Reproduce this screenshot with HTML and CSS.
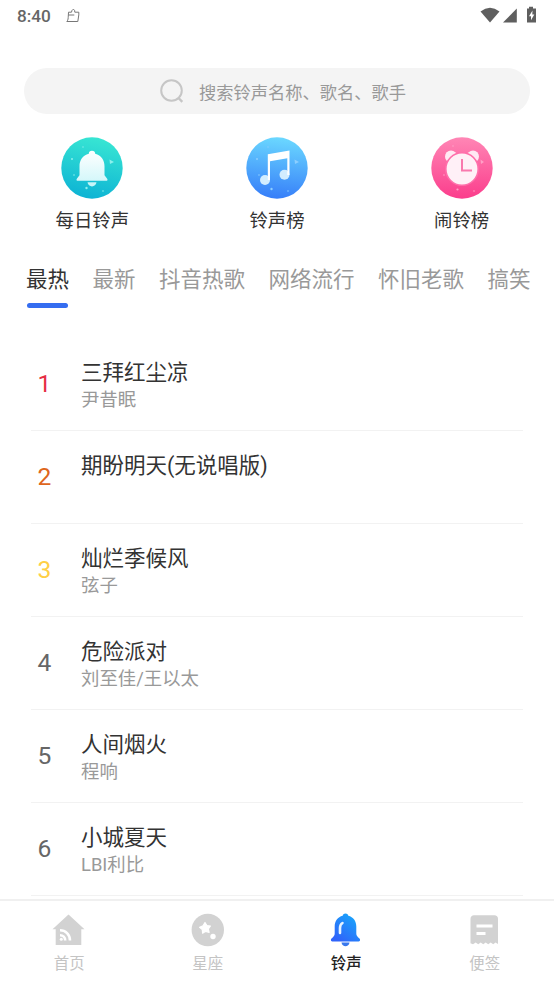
FILE: index.html
```html
<!DOCTYPE html>
<html lang="zh-CN">
<head>
<meta charset="utf-8">
<title>铃声</title>
<link rel="stylesheet" href="styles.css">
</head>
<body>
<div class="app">
  <header class="status">
    <span class="time">8:40</span>
    <svg class="status-app" width="16" height="16" viewBox="0 0 16 16" fill="none" stroke="#777" stroke-width="1" stroke-linejoin="round"><path d="M3.500 4.200h3L7 2.400c.8-1.400 2.300-1 2.600.1l.2 1.700h4v2.700l-1 6.600H1.800c1.500-1.500 1.300-3.200 1.500-5.400zM3.500 7h5.800"/></svg>
    <svg class="status-icons" width="58" height="18" viewBox="0 0 58 18" fill="#5f5f5f"><path d="M.5 5.400Q10 -1.800 19.500 5.400L10 16.500Z"/><path d="M23 16.500 36.800 2.500V16.500Z"/><path d="M49 .8h4v1.700h3v14H47v-14h2z"/><path d="M52.500 4.500 49 10.200h2v4l3.300-5.700h-2z" fill="#fff"/></svg>
  </header>

  <div class="search">
    <svg width="26" height="26" viewBox="0 0 26 26" fill="none" stroke="#c6c6c6" stroke-width="2"><circle cx="12.500" cy="12.500" r="10.300"/><path d="m19.500 20 3.800 3.800" stroke-width="2.400"/></svg>
    <span>搜索铃声名称、歌名、歌手</span>
  </div>

  <nav class="shortcuts">
    <a class="shortcut">
      <svg width="62" height="62" viewBox="0 0 62 62">
        <defs><linearGradient id="teal" x1=".6" y1="0" x2=".4" y2="1"><stop stop-color="#38e6d3"/><stop offset="1" stop-color="#0db3d4"/></linearGradient><linearGradient id="tealBell" x1="0" y1="0" x2="0" y2="1"><stop stop-color="#fff"/><stop offset="1" stop-color="#d4f7fa"/></linearGradient></defs>
        <circle cx="31" cy="31" r="30.700" fill="url(#teal)"/>
        <g fill="#8cf0ec"><path d="m48.500 22.500 4.500 2.500-4 2z"/><circle cx="11" cy="22" r="1"/><circle cx="13" cy="38" r=".8"/><circle cx="22" cy="10" r=".7"/><circle cx="25.500" cy="51" r="1.200"/><circle cx="42" cy="54" r=".8"/></g>
        <path d="M31 13.800c2 0 3.200 1.300 3.200 3 6 1.500 9.300 6.500 9.300 12.500v9l2.500 3.200c1 1.500.5 2.300-1 2.300H17c-1.500 0-2-.8-1-2.300l2.500-3.200v-9c0-6 3.300-11 9.300-12.500 0-1.700 1.200-3 3.200-3z" fill="url(#tealBell)"/>
        <path d="M26.500 45.300h9c-.6 5.500-8.400 5.500-9 0z" fill="#c7f5f8"/>
      </svg>
      <span>每日铃声</span>
    </a>
    <a class="shortcut">
      <svg width="62" height="62" viewBox="0 0 62 62">
        <defs><linearGradient id="blue" x1=".55" y1="0" x2=".45" y2="1"><stop stop-color="#6bd8ff"/><stop offset="1" stop-color="#367ef9"/></linearGradient></defs>
        <circle cx="31" cy="31" r="30.700" fill="url(#blue)"/>
        <g fill="#8cceff"><path d="m48.500 22.500 4.500 2.500-4 2z"/><circle cx="11" cy="22" r="1"/><circle cx="13" cy="38" r=".8"/><circle cx="22" cy="10" r=".7"/><circle cx="25.500" cy="52" r="1.200"/><circle cx="42" cy="54" r=".8"/></g>
        <g fill="#d2edff"><circle cx="19" cy="43" r="5"/><circle cx="38.500" cy="37.800" r="5"/></g>
        <path d="M21.800 17.300 43.500 13.600V38h-2.200V21.300L24 24.300V43h-2.200z" fill="#fff"/>
      </svg>
      <span>铃声榜</span>
    </a>
    <a class="shortcut">
      <svg width="62" height="62" viewBox="0 0 62 62">
        <defs><linearGradient id="pink" x1=".5" y1="0" x2=".5" y2="1"><stop stop-color="#ff86b5"/><stop offset="1" stop-color="#fb3d8c"/></linearGradient></defs>
        <circle cx="31" cy="31" r="30.700" fill="url(#pink)"/>
        <g fill="#ffa0c6"><path d="m49.500 22.500 3.500 2.500-3 2z"/><circle cx="13" cy="38" r=".8"/><circle cx="22" cy="9" r=".8"/><circle cx="26.500" cy="52.500" r="1.100"/><circle cx="43" cy="54" r=".8"/></g>
        <g fill="#ffe9f3"><circle cx="20" cy="19.500" r="6"/><circle cx="42" cy="19.500" r="6"/></g>
        <circle cx="31" cy="32" r="16.200" fill="#fff0f7" stroke="#ff6eaa" stroke-width="1.600"/>
        <path d="M31 22v11.500h10" fill="none" stroke="#f979ae" stroke-width="2"/>
      </svg>
      <span>闹铃榜</span>
    </a>
  </nav>

  <nav class="tabs">
    <a class="tab tab-active">最热</a><a class="tab">最新</a><a class="tab">抖音热歌</a><a class="tab">网络流行</a><a class="tab">怀旧老歌</a><a class="tab">搞笑</a>
  </nav>

  <main class="songs">
    <article class="song"><b class="rank rank-1">1</b><div><h2>三拜红尘凉</h2><p>尹昔眠</p></div></article>
    <article class="song"><b class="rank rank-2">2</b><div><h2>期盼明天(无说唱版)</h2><p></p></div></article>
    <article class="song"><b class="rank rank-3">3</b><div><h2>灿烂季候风</h2><p>弦子</p></div></article>
    <article class="song"><b class="rank">4</b><div><h2>危险派对</h2><p>刘至佳/王以太</p></div></article>
    <article class="song"><b class="rank">5</b><div><h2>人间烟火</h2><p>程响</p></div></article>
    <article class="song"><b class="rank">6</b><div><h2>小城夏天</h2><p>LBI利比</p></div></article>
  </main>

  <footer class="bottom">
    <a class="item">
      <svg width="34" height="34" viewBox="0 0 34 34"><path d="M16.500 1.500 32.500 16.300h-3.200V32H3.700V16.300H.5z" fill="#d2d2d2"/><g fill="none" stroke="#fff" stroke-width="2.600"><path d="M8 17.200c5.500 0 10 4.200 10 10.300M8 22.200c3 0 5.200 2.200 5.200 5.300"/></g><circle cx="9.300" cy="26.200" r="1.500" fill="#fff"/></svg>
      <span>首页</span>
    </a>
    <a class="item">
      <svg width="34" height="34" viewBox="0 0 34 34"><circle cx="16.800" cy="17" r="16.200" fill="#d2d2d2"/><path d="m14 9.500 1.900 3.100 3.600.4-2.200 2.800.8 3.500-3.400-1-3.100 1.900-.3-3.600-2.700-2.300 3.400-1.400z" fill="#fff" stroke="#fff" stroke-width="1.200" stroke-linejoin="round"/><circle cx="22" cy="23.500" r="2.700" fill="#fff"/></svg>
      <span>星座</span>
    </a>
    <a class="item item-active">
      <svg width="34" height="34" viewBox="0 0 34 34"><defs><linearGradient id="bell" x1=".9" y1="0" x2=".2" y2=".9"><stop stop-color="#16acfb"/><stop offset="1" stop-color="#2f64fa"/></linearGradient></defs><path d="M16.500 .5c1.700 0 2.600 1 2.800 2.200 5 1.300 8 5.300 8 10.800v7c0 2 1.200 3.300 2.900 4.700 1.600 1.400.9 3.300-1.200 3.300H4c-2.100 0-2.800-1.900-1.200-3.300 1.700-1.400 2.900-2.700 2.900-4.700v-7c0-5.500 3-9.500 8-10.800C13.900 1.500 14.800.5 16.500.5z" fill="url(#bell)"/><path d="M12.500 29.500h8c-.6 5-7.400 5-8 0z" fill="#3978ed"/><path d="M11 20v-5c0-2.500.8-4 2.500-5" fill="none" stroke="#e5f3ff" stroke-width="2.600" stroke-linecap="round"/></svg>
      <span>铃声</span>
    </a>
    <a class="item">
      <svg width="34" height="34" viewBox="0 0 34 34"><path d="M6 2.200h20.500c2 0 3.500 1.500 3.500 3.500V31l-2.500-1.500-2.300 1.700-2.500-1.700-2.500 1.700-2.500-1.700-2.500 1.700-2.500-1.700-2.500 1.700-2.500-1.700L5 31.200l-2.500-1V5.700c0-2 1.500-3.500 3.500-3.500z" fill="#d2d2d2"/><path d="M8.500 13h16M8.500 20.500h9" stroke="#fff" stroke-width="3"/></svg>
      <span>便签</span>
    </a>
  </footer>
</div>
</body>
</html>
```
FILE: styles.css
```css
* { box-sizing: border-box; }

body {
  margin: 0;
  background: #fff;
  color: #333;
  font-family: Roboto, "Noto Sans CJK SC", sans-serif;
}

.app {
  display: flex;
  flex-direction: column;
  width: 554px;
  height: 984px;
  overflow: hidden;
}

.status {
  display: flex;
  align-items: center;
  height: 32px;
  padding: 0 16px 1px 17px;
  color: #666;
}

.time {
  width: 48px;
  font-size: 17.2px;
  font-weight: 500;
}

.status-icons { margin: 0 0 2px auto; }

.search {
  display: flex;
  align-items: center;
  gap: 14px;
  height: 46px;
  margin: 36px 24px 0;
  padding-left: 135px;
  border-radius: 23px;
  background: #f4f4f4;
  color: #999;
  font-size: 17.25px;
}

.shortcuts {
  display: grid;
  grid-template-columns: repeat(3, 1fr);
  height: 118px;
  padding-top: 23px;
}

.shortcut {
  display: flex;
  flex-direction: column;
  align-items: center;
  gap: 9px;
  font-size: 18.4px;
  line-height: 26px;
}

.shortcut svg { flex: none; }

.tabs {
  display: flex;
  gap: 23.5px;
  height: 106px;
  padding: 32px 0 0 26px;
  color: #999;
  font-size: 21.5px;
  line-height: 32px;
  white-space: nowrap;
}

.tab-active { color: #333; }

.tab-active::after {
  content: "";
  display: block;
  width: 41px;
  height: 5px;
  margin: 7px auto 0;
  border-radius: 3px;
  background: #356df0;
}

.songs {
  flex: 1;
  min-height: 0;
  padding: 0 31px;
  overflow: hidden;
}

.song {
  display: flex;
  height: 93px;
  border-bottom: 1px solid #f2f2f2;
}

.rank {
  width: 50px;
  padding-left: 6.5px;
  color: #666;
  font-size: 24.6px;
  font-weight: 400;
  line-height: 91px;
}

.rank-1 { color: #e62e44; }
.rank-2 { color: #de661c; }
.rank-3 { color: #ffcf45; }

h2 {
  margin: 19px 0 0;
  font-size: 21.5px;
  font-weight: 400;
  line-height: 32px;
}

p {
  margin: 0;
  color: #999;
  font-size: 18.4px;
  line-height: 22px;
}

.bottom {
  display: grid;
  grid-template-columns: repeat(4, 1fr);
  height: 85px;
  padding-top: 12px;
  border-top: 2px solid #f0f0f0;
}

.item {
  display: flex;
  flex-direction: column;
  align-items: center;
  gap: 6px;
  color: #c4c4c4;
  font-size: 15.4px;
  line-height: 22px;
}

.item-active { color: #222; font-weight: 500; }
```
